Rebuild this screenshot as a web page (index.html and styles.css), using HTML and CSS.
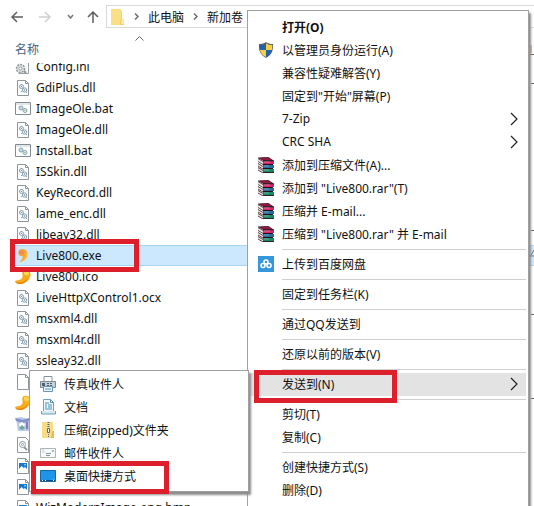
FILE: index.html
```
<!DOCTYPE html>
<html lang="zh-CN">
<head>
  <meta charset="UTF-8" />
  <title>新加卷</title>
  <link rel="stylesheet" href="styles.css">
</head>
<body>

<!-- shared icons -->
<svg class="sprites" aria-hidden="true">
  <symbol id="i-dll" viewBox="0 0 16 16">
    <path d="M2.500.5h8l3 3v12h-11z" fill="#fdfdfd" stroke="#8f9699"/>
    <path d="M10.500.5v3h3" fill="none" stroke="#8f9699"/>
    <circle cx="6.500" cy="6.500" r="2" fill="#e9f2f7" stroke="#8ba3b3"/>
    <circle cx="9.500" cy="10" r="2.200" fill="#e9f2f7" stroke="#8ba3b3"/>
    <circle cx="6.500" cy="6.500" r=".6" fill="#6f8796"/>
    <circle cx="9.500" cy="10" r=".7" fill="#6f8796"/>
    <path d="M4 6.500h1M6.500 4v1M8 8l.8.8M11 12l1 1M7 11l-1 1" stroke="#8ba3b3"/>
  </symbol>
  <symbol id="i-bat" viewBox="0 0 16 16">
    <path d="M.5 1.500h15v12H.5z" fill="#fff" stroke="#7f8c94"/>
    <path d="M1 3h14" stroke="#c5cdd2"/>
    <circle cx="6" cy="7" r="2" fill="#e3eff5" stroke="#7d9cae"/>
    <circle cx="10" cy="9.500" r="2" fill="#e3f2ee" stroke="#7fa9a0"/>
    <circle cx="6" cy="7" r=".6" fill="#6f8796"/>
    <circle cx="10" cy="9.500" r=".6" fill="#6f8796"/>
  </symbol>
  <symbol id="i-ini" viewBox="0 0 16 16">
    <path d="M3.500.5h10v14h-10" fill="#fdfdfd" stroke="#9aa0a3"/>
    <circle cx="5.500" cy="9.500" r="4" fill="#e6e9ea" stroke="#8d9497" stroke-width="1.500" stroke-dasharray="2 1"/>
    <circle cx="5.500" cy="9.500" r="1.600" fill="#fff" stroke="#8d9497"/>
    <path d="M9 12l2 2" stroke="#8d9497" stroke-width="2"/>
  </symbol>
  <symbol id="i-page" viewBox="0 0 16 16">
    <path d="M2.500.5h8l3 3v12h-11z" fill="#fff" stroke="#8f9699"/>
    <path d="M10.500.5v3h3" fill="none" stroke="#8f9699"/>
  </symbol>
  <symbol id="i-gear" viewBox="0 0 16 16">
    <path d="M2.500.5h8l3 3v12h-11z" fill="#fff" stroke="#8f9699"/>
    <circle cx="7.500" cy="7.500" r="3" fill="none" stroke="#8f9ba2"/>
    <circle cx="7.500" cy="7.500" r="1" fill="none" stroke="#8f9ba2"/>
    <path d="M9 10l3 3" stroke="#8f9ba2" stroke-width="2"/>
  </symbol>
  <symbol id="i-exe" viewBox="0 0 16 16">
    <path d="M4 2C7 0 12 1 12.500 5.500 13 10 9 14 4 14c3-2 4-4 3.500-6C5 8.500 3.500 7.500 3.500 5.500 3.300 4 3.500 3 4 2z" fill="#f7a62d"/>
    <path d="M4 3c2-1.500 5-1 5.500 2-1 2-4 2-5.500.5z" fill="#f08a5a"/>
    <path d="M10 4c2 3 0 7-3 9 3-1 5-4 5-7z" fill="#fccb45"/>
  </symbol>
  <symbol id="i-ico" viewBox="0 0 16 16">
    <path d="M8.500 1c4-1 7.500 1 7 5-.7 5-5 8.500-9.500 9C3.500 15.300.5 14.500 0 12.500c0-1.500 2-1 4-1.500 3-.8 4-3 3.500-5-.5-2-.3-4 1-5z" fill="#f9ad1b"/>
    <path d="M9 2c3-1 5 0 5 3-2 2-4 1-5 0z" fill="#fdd75c"/>
    <path d="M1 13c4 1.500 9 0 12-4-1 4-5 6-8 6-2 0-4-1-4-2z" fill="#e98312"/>
  </symbol>
  <symbol id="i-bin" viewBox="0 0 16 16">
    <path d="M1 2l5-1 8 2v12H3z" fill="#b9c9e6"/>
    <path d="M0 2l8 2 6-2v3L8 7 1 5z" fill="#8193c7"/>
    <path d="M4 8l3-2 3 2-1 3H5z" fill="#fff"/>
    <path d="M4 12l3-3 3 3-3 2z" fill="#69a7a0"/>
    <path d="M11 6h2v7h-2z" fill="#8c76bb"/>
  </symbol>
  <symbol id="i-bmp" viewBox="0 0 16 16">
    <path d="M2.500.5h8l3 3v12h-11z" fill="#fff" stroke="#8f9699"/>
    <path d="M10.500.5v3h3" fill="none" stroke="#8f9699"/>
    <path d="M4 5h8v7H4z" fill="#1979c9"/>
    <path d="M4 11l2.500-3 2 2 1.500-1 2 2v1H4z" fill="#fff"/>
    <circle cx="10" cy="6.800" r=".7" fill="#fff"/>
  </symbol>
  <symbol id="i-rar" viewBox="0 0 16 16">
    <path d="M0 1l10-1 5 3.500H5z" fill="#8d1745" stroke="#2b1118" stroke-width=".6"/>
    <path d="M0 1l5 3v3L0 4zM0 6l5 3v2.500l-5-3zM0 10l5 3v3l-5-3z" fill="#e9dfe0"/>
    <path d="M0 1.500l5 3M0 4.500l5 3M0 6.500l5 3M0 9l5 3M0 10.500l5 3M0 13l5 3" stroke="#3a1a20" stroke-width=".8"/>
    <path d="M5 4h11v3H5z" fill="#d5266c"/>
    <path d="M5 8h11v3H5z" fill="#2c6a9c"/>
    <path d="M5 12h11v3.500H5z" fill="#178a63"/>
    <path d="M5 3.800h11M5 7.500h10M5 11.500h10M5 15.600h11" stroke="#1d1418"/>
    <path d="M6 5h6M6 9h5M6 13h5" stroke="#fff" stroke-opacity=".35"/>
  </symbol>
  <symbol id="i-more" viewBox="0 0 8 14">
    <path d="M1 1l6 6-6 6" fill="none" stroke="#222" stroke-width="1.200"/>
  </symbol>
</svg>

<main class="explorer">
  <nav class="toolbar">
    <button class="nav-btn" aria-label="后退"><svg width="12" height="12" viewBox="0 0 12 12"><path d="M12 6H1M6 1L1 6l5 5" fill="none" stroke="#5d5d5d" stroke-width="1.500"/></svg></button>
    <button class="nav-btn" aria-label="前进"><svg width="12" height="12" viewBox="0 0 12 12"><path d="M0 6h11M6 1l5 5-5 5" fill="none" stroke="#d0d0d0" stroke-width="1.500"/></svg></button>
    <button class="nav-btn small" aria-label="最近位置"><svg width="7" height="6" viewBox="0 0 7 6"><path d="M1 1l2.500 3L6 1" fill="none" stroke="#777" stroke-width="1.500"/></svg></button>
    <button class="nav-btn" aria-label="上移"><svg width="12" height="12" viewBox="0 0 12 12"><path d="M6 12V1M1 6l5-5 5 5" fill="none" stroke="#5d5d5d" stroke-width="1.500"/></svg></button>
    <div class="address">
      <svg width="14" height="16" viewBox="0 0 14 16"><path d="M0 0h10v16H0z" fill="#fbdf84"/><path d="M10 2l1 0v8l2 1v5H9v-4l1-2z" fill="#f3cf66"/><path d="M10.500 11h2v4h-2z" fill="#fdf0bb"/></svg>
      <svg class="crumb-arrow" width="5" height="7" viewBox="0 0 5 7"><path d="M1 .5l3 3-3 3" fill="none" stroke="#666" stroke-width="1.400"/></svg>
      <a href="#">此电脑</a>
      <svg class="crumb-arrow" width="5" height="7" viewBox="0 0 5 7"><path d="M1 .5l3 3-3 3" fill="none" stroke="#666" stroke-width="1.400"/></svg>
      <a href="#">新加卷</a>
    </div>
  </nav>

  <div class="columns">
    <svg class="sort" width="9" height="5" viewBox="0 0 9 5"><path d="M.5 4.500l4-4 4 4" fill="none" stroke="#666"/></svg>
    <button class="column-name">名称</button>
  </div>

  <ul class="files">
    <li><svg class="icon"><use href="#i-ini"/></svg>Config.ini</li>
    <li><svg class="icon"><use href="#i-dll"/></svg>GdiPlus.dll</li>
    <li><svg class="icon"><use href="#i-bat"/></svg>ImageOle.bat</li>
    <li><svg class="icon"><use href="#i-dll"/></svg>ImageOle.dll</li>
    <li><svg class="icon"><use href="#i-bat"/></svg>Install.bat</li>
    <li><svg class="icon"><use href="#i-dll"/></svg>ISSkin.dll</li>
    <li><svg class="icon"><use href="#i-dll"/></svg>KeyRecord.dll</li>
    <li><svg class="icon"><use href="#i-dll"/></svg>lame_enc.dll</li>
    <li><svg class="icon"><use href="#i-dll"/></svg>libeay32.dll</li>
    <li class="selected"><svg class="icon"><use href="#i-exe"/></svg>Live800.exe<span class="mark mark-file"></span></li>
    <li><svg class="icon"><use href="#i-ico"/></svg>Live800.ico</li>
    <li><svg class="icon"><use href="#i-dll"/></svg>LiveHttpXControl1.ocx</li>
    <li><svg class="icon"><use href="#i-dll"/></svg>msxml4.dll</li>
    <li><svg class="icon"><use href="#i-dll"/></svg>msxml4r.dll</li>
    <li><svg class="icon"><use href="#i-dll"/></svg>ssleay32.dll</li>
    <li><svg class="icon"><use href="#i-page"/></svg></li>
    <li><svg class="icon"><use href="#i-ico"/></svg></li>
    <li><svg class="icon"><use href="#i-bin"/></svg></li>
    <li><svg class="icon"><use href="#i-gear"/></svg></li>
    <li><svg class="icon"><use href="#i-bmp"/></svg></li>
    <li><svg class="icon"><use href="#i-bmp"/></svg></li>
    <li><svg class="icon"><use href="#i-bmp"/></svg>WizModernImage-eng.bmp</li>
  </ul>

  <!-- what shows of the columns behind the menu -->
  <svg class="edge" width="5" height="506" viewBox="0 0 5 506" aria-hidden="true">
    <path d="M0 54.500h5M2 83.500h3M2 230.500h3M2 314.500h3M2 398.500h3" stroke="#666"/>
    <path d="M2 45v8" stroke="#edb79c" stroke-width="2"/>
    <path d="M1 257l4-7M2 256h3" stroke="#6c7c88"/>
  </svg>
</main>

<!-- context menu -->
<div class="menu context">
  <button class="item default"><span class="slot"></span>打开(O)</button>
  <button class="item"><span class="slot"><svg class="icon" viewBox="0 0 16 16"><path d="M8 0c2 1.500 4 2 7 2 .5 7-1.500 11-7 14C2.500 13 .5 9 1 2c3 0 5-.5 7-2z" fill="#59636c"/><path d="M8 1.200V8H1.900C1.600 6.500 1.700 4.500 1.800 3 4.500 3 6 2.500 8 1.200zM8 8h6.100c-.8 3.300-2.500 5.500-6.100 7z" fill="#2461a9"/><path d="M8 1.200C10 2.500 11.500 3 14.200 3c.1 1.500.2 3.500-.1 5H8zM8 8v7C4.400 13.500 2.700 11.300 1.900 8z" fill="#f5cf45"/></svg></span>以管理员身份运行(A)</button>
  <button class="item"><span class="slot"></span>兼容性疑难解答(Y)</button>
  <button class="item"><span class="slot"></span>固定到"开始"屏幕(P)</button>
  <button class="item"><span class="slot"></span>7-Zip<svg class="more"><use href="#i-more"/></svg></button>
  <button class="item"><span class="slot"></span>CRC SHA<svg class="more"><use href="#i-more"/></svg></button>
  <button class="item"><span class="slot"><svg class="icon"><use href="#i-rar"/></svg></span>添加到压缩文件(A)...</button>
  <button class="item"><span class="slot"><svg class="icon"><use href="#i-rar"/></svg></span>添加到 "Live800.rar"(T)</button>
  <button class="item"><span class="slot"><svg class="icon"><use href="#i-rar"/></svg></span>压缩并 E-mail...</button>
  <button class="item"><span class="slot"><svg class="icon"><use href="#i-rar"/></svg></span>压缩到 "Live800.rar" 并 E-mail</button>
  <hr>
  <button class="item"><span class="slot"><svg class="icon" viewBox="0 0 16 16"><path d="M0 0h16v16H0z" fill="#3596dc"/><g fill="none" stroke="#fff" stroke-width="1.600"><circle cx="8" cy="6" r="2"/><circle cx="5" cy="9.500" r="2"/><circle cx="11" cy="9.500" r="2"/></g></svg></span>上传到百度网盘</button>
  <hr>
  <button class="item"><span class="slot"></span>固定到任务栏(K)</button>
  <hr>
  <button class="item"><span class="slot"></span>通过QQ发送到</button>
  <hr>
  <button class="item"><span class="slot"></span>还原以前的版本(V)</button>
  <hr>
  <button class="item open"><span class="slot"></span>发送到(N)<svg class="more"><use href="#i-more"/></svg><span class="mark mark-send"></span></button>
  <hr>
  <button class="item"><span class="slot"></span>剪切(T)</button>
  <button class="item"><span class="slot"></span>复制(C)</button>
  <hr>
  <button class="item"><span class="slot"></span>创建快捷方式(S)</button>
  <button class="item"><span class="slot"></span>删除(D)</button>
</div>

<!-- send-to submenu -->
<div class="menu sendto">
  <button class="item"><span class="slot"><svg class="icon" viewBox="0 0 16 16"><path d="M4 .5h8v5H4z" fill="#fff" stroke="#8b9299"/><path d="M.5 5.500h15v6H.5z" fill="#c3ced7" stroke="#7b8893"/><path d="M2 7h3v3H2zM7 7h2v1H7zM10 7h2v1h-2zM7 9h2v1H7zM10 9h2v1h-2z" fill="#4c5f6f"/><path d="M3.500 10.500h9v5h-9z" fill="#e9f4fb" stroke="#6d95b3"/><path d="M5 13h6" stroke="#4f9acb"/></svg></span>传真收件人</button>
  <button class="item"><span class="slot"><svg class="icon" viewBox="0 0 16 16"><path d="M3.500.5h7l3 3v9h-10z" fill="#eef7fc" stroke="#6da0bd"/><path d="M10.500.5v3h3M5 4h4M5 6h2M8 6h4M5 8h2M8 8h4M5 10h7" fill="none" stroke="#4f91b8"/><path d="M1.500 12v3h14v-3" fill="#d6e8f2" stroke="#6da0bd"/></svg></span>文档</button>
  <button class="item"><span class="slot"><svg class="icon" viewBox="0 0 16 16"><path d="M2 0h11v16H2z" fill="#f8dc83"/><path d="M12 9h2v7h-3z" fill="#e9bd4f"/><path d="M7 0h3v16H7z" fill="#e2ddca"/><path d="M8.500 0v6" stroke="#6c6655" stroke-width="2" stroke-dasharray="1 1"/><path d="M7.500 6.500h2v4h-2z" fill="#fff" stroke="#6c6655"/><path d="M8.500 12v4" stroke="#6c6655" stroke-dasharray="1 1"/></svg></span>压缩(zipped)文件夹</button>
  <button class="item"><span class="slot"><svg class="icon" viewBox="0 0 16 16"><path d="M.5 3.500h15v9H.5z" fill="#fafbfb" stroke="#aeb5ba"/><path d="M2 5h2M2 7h3" stroke="#c3c9cd"/><path d="M12 5h2v2h-2z" fill="#9fb7c6"/><path d="M6 8.500h5M6 10.500h4" stroke="#7f94a3"/></svg></span>邮件收件人</button>
  <button class="item"><span class="slot"><svg class="icon" viewBox="0 0 16 16"><path d="M.5 2.500h15v11H.5z" fill="#1e95ea" stroke="#1567a8"/><path d="M15 3v7L8 13h7z" fill="#3baaf5"/><path d="M1 12.500h14" stroke="#114d80"/><path d="M2 12.500h1M5 12.500h1M13 12.500h1" stroke="#fff"/></svg></span>桌面快捷方式<span class="mark mark-desktop"></span></button>
</div>

</body>
</html>
```
FILE: styles.css
```
body {
  margin: 0;
  height: 100vh;
  overflow: hidden;
  position: relative;
  background: #fff;
  color: #111;
  font-family: "Noto Sans", "Noto Sans CJK SC", sans-serif;
  font-size: 12px;
}

button {
  border: none;
  background: none;
  padding: 0;
  margin: 0;
  font: inherit;
  color: inherit;
  text-align: left;
}

.sprites {
  display: none;
}

.icon {
  width: 16px;
  height: 16px;
  flex: none;
}

.explorer {
  display: flex;
  flex-direction: column;
  height: 100%;
}

/* toolbar */
.toolbar {
  display: flex;
  align-items: center;
  gap: 16px;
  padding: 5px 0 0 11px;
}

.nav-btn {
  display: flex;
}

.nav-btn.small {
  margin-right: -3px;
}

.address {
  flex: 1;
  display: flex;
  align-items: center;
  gap: 9px;
  height: 21px;
  margin-left: -9px;
  padding-left: 4px;
  border: 1px solid #d9d9d9;
  border-right: none;
  white-space: nowrap;
}

.address a {
  color: #111;
  text-decoration: none;
}

/* column header */
.columns {
  display: flex;
  flex-direction: column;
  height: 27px;
  padding: 8px 15px 0;
}

.sort {
  margin-left: 120px;
}

.column-name {
  color: #44627f;
  line-height: 18px;
}

/* file list, scrolled a little */
.files {
  flex: 1;
  min-height: 0;
  list-style: none;
  margin: 0;
  padding: 0;
  overflow: hidden;
}

.files li {
  position: relative;
  display: flex;
  align-items: center;
  gap: 5px;
  height: 21px;
  margin-left: 15px;
}

.files li:first-child {
  margin-top: -7px;
}

.files .selected {
  background: #cce8ff;
  box-shadow: inset 0 1px #a9d5f5, inset 0 -1px #a9d5f5;
}

.edge {
  position: absolute;
  top: 0;
  right: 0;
}

/* menus */
.menu {
  position: absolute;
  box-sizing: border-box;
  background: #fff;
  border: 1px solid #a0a0a0;
  box-shadow: 2px 3px 2px #8c8c8c;
}

.context {
  top: 10px;
  bottom: -4px;
  left: 247px;
  right: 5px;
  padding: 5px 2px;
}

.sendto {
  top: 370px;
  left: 29px;
  width: 220px;
  padding: 2px 2px 3px;
}

.item {
  position: relative;
  display: flex;
  align-items: center;
  width: 100%;
  height: 23px;
  padding-bottom: 2px;
  white-space: pre;
}

.default {
  font-weight: bold;
}

.open {
  background: #e3e3e3;
}

.slot {
  display: flex;
  flex: none;
  width: 24px;
  padding-left: 8px;
}

.more {
  width: 8px;
  height: 14px;
  margin-left: auto;
  margin-right: 8px;
}

.menu hr {
  height: 1px;
  margin: 3px 0 3px 32px;
  border: none;
  background: #d0d0d0;
}

/* red frames */
.mark {
  position: absolute;
  z-index: 1;
  box-sizing: border-box;
  border: 5px solid #dc1f2b;
}

.mark-file {
  top: -6px;
  left: -5px;
  width: 129px;
  height: 33px;
}

.mark-send {
  top: -3px;
  left: 4px;
  width: 143px;
  height: 33px;
}

.mark-desktop {
  top: -4px;
  left: -1px;
  width: 138px;
  height: 33px;
}
```
